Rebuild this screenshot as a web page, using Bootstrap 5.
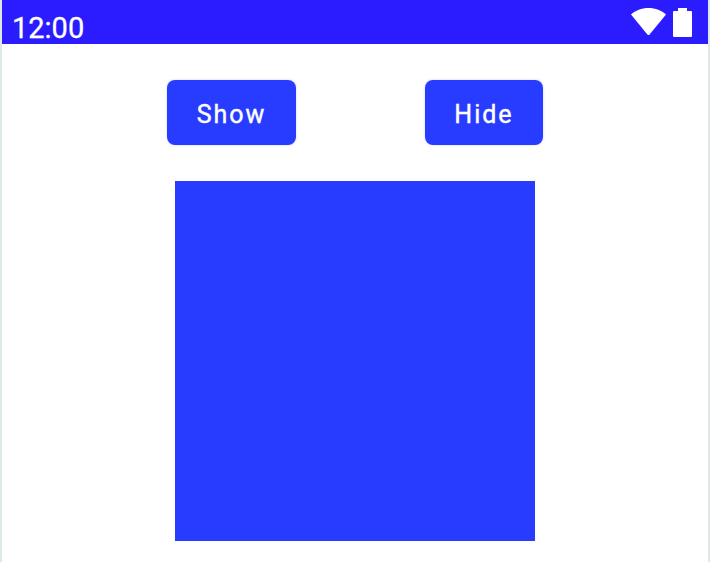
<!DOCTYPE html>
<html lang="en">

<head>
    <meta charset="UTF-8">
    <meta name="viewport" content="width=device-width, initial-scale=1.0">
    <title>Show and Hide</title>
    <link href="https://cdn.jsdelivr.net/npm/bootstrap@5.3.3/dist/css/bootstrap.min.css" rel="stylesheet">
    <style>
        html,
        body {
            height: 562px;
            overflow: hidden;
        }

        body {
            background: #fff;
            font-family: Roboto, sans-serif;
        }

        .phone-frame {
            height: 562px;
            border-left: 2px solid #dfe8e8;
            border-right: 2px solid #dfe8e8;
        }

        .status-strip {
            height: 44px;
            background: #2a1cff;
            padding-left: 10px;
            padding-right: 16px;
        }

        .status-time {
            font-size: 29px;
            line-height: 1;
            margin-top: 14px;
            -webkit-text-stroke: 0.3px #fff;
        }

        .status-icons {
            gap: 7px;
            margin-top: 8px;
        }

        .action-row {
            padding-top: 36px;
            padding-left: 165px;
        }

        .action-btn {
            height: 65px;
            background: #283cff;
            border: 0;
            border-radius: 8px;
            color: #fff;
            font-size: 25px;
            font-weight: 400;
            letter-spacing: 2px;
            -webkit-text-stroke: 0.4px #fff;
            padding: 5px 0 0;
            box-shadow: 0 0 3px rgba(40, 60, 255, 0.2);
        }

        .action-btn:hover,
        .action-btn:active {
            background: #283cff !important;
            color: #fff !important;
        }

        .btn-show {
            width: 129px;
        }

        .btn-hide {
            width: 118px;
            margin-left: 129px;
        }

        .blue-box {
            width: 360px;
            height: 360px;
            margin-top: 36px;
            margin-left: 173px;
            background: #283cff;
        }
    </style>
</head>

<body>
    <div class="phone-frame">
        <div class="status-strip d-flex justify-content-between align-items-start text-white">
            <span class="status-time">12:00</span>
            <div class="status-icons d-flex align-items-start">
                <svg width="35" height="27" viewBox="0 0 35 27">
                    <path d="M0 6.5C4.5 2.5 10.5 0 17.500 0S30.500 2.500 35 6.500L18.800 26.300a1.700 1.700 0 0 1-2.600 0Z" fill="#fff" />
                </svg>
                <svg width="19" height="29" viewBox="0 0 19 29">
                    <path d="M5 0h9v3h4a1 1 0 0 1 1 1v24a1 1 0 0 1-1 1H1a1 1 0 0 1-1-1V4a1 1 0 0 1 1-1h4Z" fill="#fff" />
                </svg>
            </div>
        </div>

        <div class="action-row d-flex">
            <button type="button" class="btn action-btn btn-show" id="showBtn">Show</button>
            <button type="button" class="btn action-btn btn-hide" id="hideBtn">Hide</button>
        </div>

        <div class="blue-box" id="box"></div>
    </div>

    <script src="https://cdn.jsdelivr.net/npm/bootstrap@5.3.3/dist/js/bootstrap.bundle.min.js"></script>
    <script>
        let box = document.getElementById("box");

        document.getElementById("showBtn").addEventListener("click", () => {
            box.style.visibility = 'visible';
        });

        document.getElementById("hideBtn").addEventListener("click", () => {
            box.style.visibility = 'hidden';
        });
    </script>

</body>

</html>
